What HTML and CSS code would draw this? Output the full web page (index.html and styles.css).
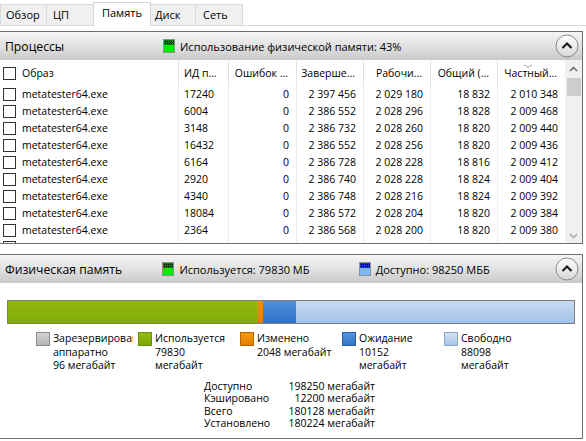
FILE: index.html
```html
<!DOCTYPE html>
<html lang="ru">
<head>
  <meta charset="UTF-8">
  <title>Монитор ресурсов - Память</title>
  <link rel="stylesheet" href="styles.css">
</head>
<body>
  <div class="tabs">
    <div class="tab tab-overview">Обзор</div>
    <div class="tab tab-cpu">ЦП</div>
    <div class="tab tab-mem active">Память</div>
    <div class="tab tab-disk">Диск</div>
    <div class="tab tab-net">Сеть</div>
  </div>

  <!-- Processes -->
  <div class="panel panel-procs">
    <div class="panel-head">
      <div class="panel-title">Процессы</div>
      <div class="head-stat">
        <svg class="mini" width="12" height="14" viewBox="0 0 12 14">
          <defs>
            <pattern id="dotsG" width="2" height="2" patternUnits="userSpaceOnUse">
              <rect width="2" height="2" fill="#0f7a0f"/>
              <rect width="1" height="1" fill="#000"/>
            </pattern>
          </defs>
          <rect x="0.5" y="0.5" width="11" height="13" fill="#00ee00" stroke="#8f8f8f"/>
          <rect x="1" y="1" width="10" height="5" fill="url(#dotsG)"/>
        </svg>
        Использование физической памяти: 43%
      </div>
      <div class="collapse">
        <svg width="24" height="24" viewBox="0 0 24 24">
          <defs>
            <linearGradient id="btnG" x1="0" y1="0" x2="0" y2="1">
              <stop offset="0" stop-color="#ffffff"/>
              <stop offset="1" stop-color="#d6d6d6"/>
            </linearGradient>
          </defs>
          <circle cx="12" cy="12" r="11" fill="url(#btnG)" stroke="#8a8a8a"/>
          <path d="M7.5 14 L12 9.5 L16.5 14" fill="none" stroke="#1e1e1e" stroke-width="2.2"/>
        </svg>
      </div>
    </div>

    <div class="grid-area">
      <div class="list">
        <div class="row head">
          <div class="c-name"><span class="chk"></span>Образ</div>
          <div class="c-id">ИД п...</div>
          <div class="c-h">Ошибок ...</div>
          <div class="c-h">Заверше...</div>
          <div class="c-h">Рабочи...</div>
          <div class="c-h">Общий (...</div>
          <div class="c-h sorted">Частный...</div>
        </div>
        <div class="row"><div class="c-name"><span class="chk"></span>metatester64.exe</div><div class="c-id">17240</div><div class="c-num">0</div><div class="c-num">2&nbsp;397&nbsp;456</div><div class="c-num">2&nbsp;029&nbsp;180</div><div class="c-num">18&nbsp;832</div><div class="c-num">2&nbsp;010&nbsp;348</div></div>
        <div class="row"><div class="c-name"><span class="chk"></span>metatester64.exe</div><div class="c-id">6004</div><div class="c-num">0</div><div class="c-num">2&nbsp;386&nbsp;552</div><div class="c-num">2&nbsp;028&nbsp;296</div><div class="c-num">18&nbsp;828</div><div class="c-num">2&nbsp;009&nbsp;468</div></div>
        <div class="row"><div class="c-name"><span class="chk"></span>metatester64.exe</div><div class="c-id">3148</div><div class="c-num">0</div><div class="c-num">2&nbsp;386&nbsp;732</div><div class="c-num">2&nbsp;028&nbsp;260</div><div class="c-num">18&nbsp;820</div><div class="c-num">2&nbsp;009&nbsp;440</div></div>
        <div class="row"><div class="c-name"><span class="chk"></span>metatester64.exe</div><div class="c-id">16432</div><div class="c-num">0</div><div class="c-num">2&nbsp;386&nbsp;552</div><div class="c-num">2&nbsp;028&nbsp;256</div><div class="c-num">18&nbsp;820</div><div class="c-num">2&nbsp;009&nbsp;436</div></div>
        <div class="row"><div class="c-name"><span class="chk"></span>metatester64.exe</div><div class="c-id">6164</div><div class="c-num">0</div><div class="c-num">2&nbsp;386&nbsp;728</div><div class="c-num">2&nbsp;028&nbsp;228</div><div class="c-num">18&nbsp;816</div><div class="c-num">2&nbsp;009&nbsp;412</div></div>
        <div class="row"><div class="c-name"><span class="chk"></span>metatester64.exe</div><div class="c-id">2920</div><div class="c-num">0</div><div class="c-num">2&nbsp;386&nbsp;740</div><div class="c-num">2&nbsp;028&nbsp;228</div><div class="c-num">18&nbsp;824</div><div class="c-num">2&nbsp;009&nbsp;404</div></div>
        <div class="row"><div class="c-name"><span class="chk"></span>metatester64.exe</div><div class="c-id">4340</div><div class="c-num">0</div><div class="c-num">2&nbsp;386&nbsp;748</div><div class="c-num">2&nbsp;028&nbsp;216</div><div class="c-num">18&nbsp;824</div><div class="c-num">2&nbsp;009&nbsp;392</div></div>
        <div class="row"><div class="c-name"><span class="chk"></span>metatester64.exe</div><div class="c-id">18084</div><div class="c-num">0</div><div class="c-num">2&nbsp;386&nbsp;572</div><div class="c-num">2&nbsp;028&nbsp;204</div><div class="c-num">18&nbsp;820</div><div class="c-num">2&nbsp;009&nbsp;384</div></div>
        <div class="row"><div class="c-name"><span class="chk"></span>metatester64.exe</div><div class="c-id">2364</div><div class="c-num">0</div><div class="c-num">2&nbsp;386&nbsp;568</div><div class="c-num">2&nbsp;028&nbsp;200</div><div class="c-num">18&nbsp;820</div><div class="c-num">2&nbsp;009&nbsp;380</div></div>
        <div class="row"><div class="c-name"><span class="chk"></span>metatester64.exe</div><div class="c-id">3140</div><div class="c-num">0</div><div class="c-num">2&nbsp;386&nbsp;736</div><div class="c-num">2&nbsp;028&nbsp;192</div><div class="c-num">18&nbsp;820</div><div class="c-num">2&nbsp;009&nbsp;372</div></div>
      </div>

      <div class="scrollbar">
        <div class="sb-btn">
          <svg width="9" height="6" viewBox="0 0 9 6"><path d="M1 5 L4.5 1.5 L8 5" fill="none" stroke="#5f5f5f" stroke-width="1.4"/></svg>
        </div>
        <div class="sb-thumb"></div>
        <div class="sb-track"></div>
        <div class="sb-btn sb-down">
          <svg width="9" height="6" viewBox="0 0 9 6"><path d="M1 1 L4.5 4.5 L8 1" fill="none" stroke="#a3a3a3" stroke-width="1.4"/></svg>
        </div>
      </div>
    </div>
  </div>

  <!-- Physical memory -->
  <div class="panel panel-mem">
    <div class="panel-head">
      <div class="panel-title">Физическая память</div>
      <div class="head-stat">
        <svg class="mini" width="12" height="14" viewBox="0 0 12 14">
          <rect x="0.5" y="0.5" width="11" height="13" fill="#00ee00" stroke="#8f8f8f"/>
          <rect x="1" y="1" width="10" height="5" fill="url(#dotsG)"/>
        </svg>
        Используется: 79830 МБ
      </div>
      <div class="head-stat">
        <svg class="mini" width="12" height="14" viewBox="0 0 12 14">
          <defs>
            <pattern id="dotsB" width="2" height="2" patternUnits="userSpaceOnUse">
              <rect width="2" height="2" fill="#1530d8"/>
              <rect width="1" height="1" fill="#000"/>
            </pattern>
          </defs>
          <rect x="0.5" y="0.5" width="11" height="13" fill="#7fb6ff" stroke="#8f8f8f"/>
          <rect x="1" y="1" width="10" height="5" fill="url(#dotsB)"/>
        </svg>
        Доступно: 98250 МББ
      </div>
      <div class="collapse">
        <svg width="24" height="24" viewBox="0 0 24 24">
          <circle cx="12" cy="12" r="11" fill="url(#btnG)" stroke="#8a8a8a"/>
          <path d="M7.5 14 L12 9.5 L16.5 14" fill="none" stroke="#1e1e1e" stroke-width="2.2"/>
        </svg>
      </div>
    </div>

    <div class="mem-body">
      <div class="usage">
        <div class="seg seg-used" style="width: 249px"></div>
        <div class="seg seg-mod" style="width: 6px"></div>
        <div class="seg seg-stby" style="width: 33px"></div>
        <div class="seg seg-free"></div>
      </div>

      <div class="legend">
        <div class="legend-item">
          <span class="sw sw-hw"></span>
          <div class="legend-text">Зарезервировано<br>аппаратно<br>96 мегабайт</div>
        </div>
        <div class="legend-item">
          <span class="sw sw-used"></span>
          <div class="legend-text">Используется<br>79830<br>мегабайт</div>
        </div>
        <div class="legend-item">
          <span class="sw sw-mod"></span>
          <div class="legend-text">Изменено<br>2048 мегабайт</div>
        </div>
        <div class="legend-item">
          <span class="sw sw-stby"></span>
          <div class="legend-text">Ожидание<br>10152<br>мегабайт</div>
        </div>
        <div class="legend-item">
          <span class="sw sw-free"></span>
          <div class="legend-text">Свободно<br>88098<br>мегабайт</div>
        </div>
      </div>

      <div class="stats">
        <div>Доступно</div><div class="val">198250 мегабайт</div>
        <div>Кэшировано</div><div class="val">12200 мегабайт</div>
        <div>Всего</div><div class="val">180128 мегабайт</div>
        <div>Установлено</div><div class="val">180224 мегабайт</div>
      </div>
    </div>
  </div>
</body>
</html>
```

FILE: styles.css
```css
body {
  margin: 0;
  width: 586px;
  height: 441px;
  overflow: hidden;
  background: #fff;
  color: #000;
  font-family: "Open Sans", "Noto Sans", sans-serif;
  font-size: 10.5px;
}

/* tabs */
.tabs {
  display: flex;
  height: 25px;
  border-bottom: 1px solid #d9d9d9;
  font-size: 11px;
}
.tab {
  box-sizing: border-box;
  height: 21px;
  margin-top: 4px;
  margin-right: -1px;
  padding-left: 6px;
  line-height: 20px;
  background: #f0f0f0;
  border: 1px solid #d9d9d9;
  border-bottom: none;
  color: #000;
}
.tab-overview { width: 47px; padding-left: 5px; }
.tab-cpu { width: 50px; }
.tab-mem { width: 54px; }
.tab-disk { width: 48px; }
.tab-net { width: 48px; padding-left: 7px; }
.tab.active {
  position: relative;
  z-index: 1;
  width: 58px;
  height: 24px;
  margin: 2px -3px -1px -2px;
  padding-left: 8px;
  line-height: 20px;
  background: #fff;
}

/* panels */
.panel {
  width: 582px;
  border-top: 1px solid #6e6e6e;
  border-right: 1px solid #6e6e6e;
  border-bottom: 1px solid #6e6e6e;
}
.panel-procs { margin-top: 5px; }
.panel-mem { margin-top: 10px; }

.panel-head {
  display: flex;
  align-items: center;
  height: 28px;
  background: linear-gradient(#f5f5f5, #e0e0e0 55%, #c9c9c9);
  font-size: 11px;
}
.panel-title {
  width: 163px;
  padding-left: 5px;
  box-sizing: border-box;
  font-size: 12.2px;
}
.head-stat {
  display: flex;
  align-items: center;
  width: 197px;
  white-space: nowrap;
}
.mini {
  margin-right: 5px;
  flex: none;
}
.collapse {
  margin-left: auto;
  margin-right: 3px;
  height: 24px;
}

/* process list */
.grid-area {
  display: flex;
  height: 183px;
}
.list {
  width: 565px;
  overflow: hidden;
}
.row {
  display: grid;
  grid-template-columns: 178px 50px 68px 67px 67px 67px 68px;
  height: 17px;
  line-height: 17px;
}
.row > div {
  box-sizing: border-box;
  white-space: nowrap;
  overflow: hidden;
}
.row > div + div {
  border-left: 1px solid #eaeff7;
}
.row.head {
  height: 26px;
  line-height: 26px;
}
.row.head > div + div {
  border-left-color: #e3e3e3;
}
.c-name {
  display: flex;
  align-items: center;
  padding-left: 3px;
}
.chk {
  box-sizing: border-box;
  width: 13px;
  height: 13px;
  margin-right: 6px;
  border: 1px solid #333;
  background: #fff;
  flex: none;
}
.c-id { padding-left: 5px; }
.c-h {
  text-align: right;
  padding-right: 8px;
}
.c-num {
  text-align: right;
  padding-right: 7px;
}
.sorted {
  position: relative;
}
.sorted::before {
  content: '';
  position: absolute;
  left: 27px;
  top: 2px;
  width: 5px;
  height: 5px;
  border-right: 1px solid #a8a8a8;
  border-bottom: 1px solid #a8a8a8;
  transform: scale(1.1, 0.6) rotate(45deg);
}

.scrollbar {
  width: 17px;
  display: flex;
  flex-direction: column;
  background: #f0f0f0;
}
.sb-btn {
  height: 17px;
  display: flex;
  align-items: center;
  justify-content: center;
  flex: none;
}
.sb-down { height: 15px; }
.sb-thumb {
  height: 18px;
  margin: 1px 1px 0 2px;
  background: #cdcdcd;
}
.sb-track { flex: 1; }

/* physical memory */
.mem-body {
  box-sizing: border-box;
  height: 155px;
  padding-top: 17px;
}
.usage {
  display: flex;
  box-sizing: border-box;
  width: 568px;
  height: 24px;
  margin-left: 7px;
  border: 1px solid #7d7d7d;
}
.seg { height: 100%; }
.seg-used { background: linear-gradient(#8fb80e, #84ac08); }
.seg-mod { background: linear-gradient(#f29100, #e07f00); }
.seg-stby { background: linear-gradient(#4f8fdb, #2f72c7); }
.seg-free { flex: 1; background: linear-gradient(#c8dbf3, #a3c1e9); }

.legend {
  display: flex;
  margin: 8px 0 0 36px;
}
.legend-item {
  display: flex;
  width: 102px;
}
.sw {
  box-sizing: border-box;
  width: 14px;
  height: 14px;
  margin-right: 3px;
  border: 1px solid;
  flex: none;
}
.sw-hw { background: linear-gradient(#d2d2d2, #b4b4b4); border-color: #8d8d8d; }
.sw-used { background: linear-gradient(#92bb12, #7ea607); border-color: #6b8f08; }
.sw-mod { background: linear-gradient(#f59a10, #e07f00); border-color: #b56600; }
.sw-stby { background: linear-gradient(#5594dd, #3474c8); border-color: #2b5fa6; }
.sw-free { background: linear-gradient(#d3e2f5, #a9c5ea); border-color: #8aa7cf; }
.legend-text {
  width: 80px;
  overflow: hidden;
  white-space: nowrap;
  line-height: 13.5px;
}

.stats {
  display: grid;
  grid-template-columns: 82px 89px;
  margin: 7px 0 0 204px;
  line-height: 12.5px;
}
.stats .val {
  text-align: right;
  white-space: nowrap;
}
```
